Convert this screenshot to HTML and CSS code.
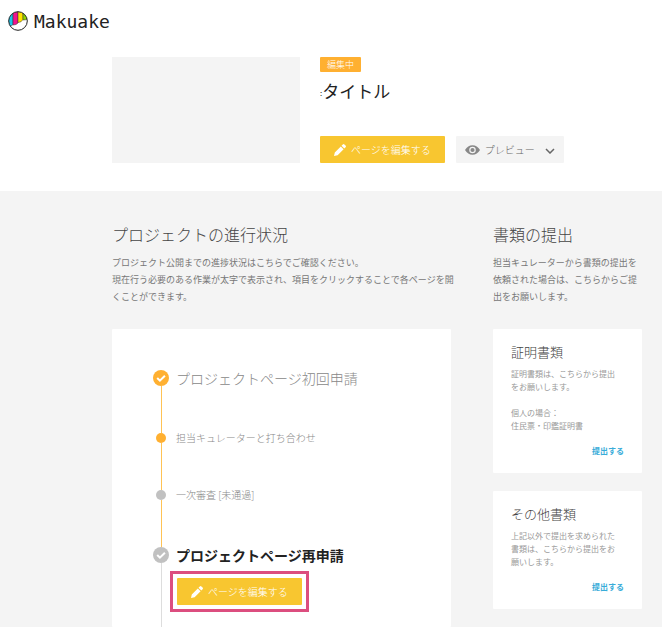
FILE: index.html
```html
<!DOCTYPE html>
<html lang="ja">
<head>
    <meta charset="utf-8">
    <title>Makuake</title>
    <link rel="stylesheet" href="styles.css">
</head>
<body>
    <header class="site-header">
        <a class="logo" href="#">
            <svg class="logo-mark" viewBox="0 0 20 20" aria-hidden="true">
                <defs>
                    <clipPath id="mark"><circle cx="10" cy="10" r="9.300"/></clipPath>
                </defs>
                <circle cx="10" cy="10" r="9.300" fill="#fff"/>
                <g clip-path="url(#mark)" stroke="#333" stroke-width="0.500">
                    <path d="M0 0h5v13.500q-1 1.300-2.500 1.300H0z" fill="#1cc3ea"/>
                    <path d="M5 0h5v12q-1.500 2-5 2z" fill="#f0148c"/>
                    <path d="M10 0h5v8.500q-1.500 3-5 3z" fill="#ffe100"/>
                    <path d="M15 0h5v7q-1.500 2.500-5 2z" fill="#8fd400"/>
                </g>
                <circle cx="10" cy="10" r="9.300" fill="none" stroke="#222"/>
            </svg>
            <span>Makuake</span>
        </a>
    </header>

    <section class="project">
        <div class="thumbnail"></div>
        <div class="project-info">
            <span class="status">編集中</span>
            <h1><span class="mark">:</span>タイトル</h1>
            <div class="actions">
                <button type="button" class="btn btn-edit">
                    <svg class="icon-pencil" viewBox="0 0 12 12" aria-hidden="true">
                        <path d="M0 12l.8-3.600 6-6 2.800 2.800-6 6zM7.500 1.700L8.800.4q.8-.7 1.600 0l1.200 1.200q.7.8 0 1.600l-1.300 1.300z" fill="#fff"/>
                    </svg>
                    ページを編集する
                </button>
                <button type="button" class="btn btn-preview">
                    <svg class="icon-eye" viewBox="0 0 16 10" aria-hidden="true">
                        <path d="M0 5Q3 0 8 0t8 5q-3 5-8 5T0 5z" fill="#888"/>
                        <circle cx="8" cy="5" r="3.500" fill="#f4f4f4"/>
                        <circle cx="8" cy="5" r="2.200" fill="#888"/>
                    </svg>
                    プレビュー
                    <svg class="icon-arrow" viewBox="0 0 10 6" aria-hidden="true">
                        <path d="M1 1l4 4 4-4" fill="none" stroke="#666" stroke-width="1.500"/>
                    </svg>
                </button>
            </div>
        </div>
    </section>

    <main class="content">
        <section class="progress">
            <h2>プロジェクトの進行状況</h2>
            <p class="lead">プロジェクト公開までの進捗状況はこちらでご確認ください。<br>現在行う必要のある作業が太字で表示され、項目をクリックすることで各ページを開<br>くことができます。</p>
            <ol class="steps">
                <li class="step">
                    <div class="rail">
                        <svg class="check" viewBox="0 0 16 16" aria-hidden="true">
                            <circle cx="8" cy="8" r="8" fill="#ffb031"/>
                            <path d="M4.200 8l2.700 2.700 5-5" fill="none" stroke="#fff" stroke-width="2"/>
                        </svg>
                    </div>
                    <h3>プロジェクトページ初回申請</h3>
                </li>
                <li class="step small">
                    <div class="rail"><span class="dot done"></span></div>
                    <p>担当キュレーターと打ち合わせ</p>
                </li>
                <li class="step small">
                    <div class="rail"><span class="dot"></span></div>
                    <p>一次審査 [未通過]</p>
                </li>
                <li class="step current">
                    <div class="rail">
                        <svg class="check" viewBox="0 0 16 16" aria-hidden="true">
                            <circle cx="8" cy="8" r="8" fill="#c1c1c1"/>
                            <path d="M4.200 8l2.700 2.700 5-5" fill="none" stroke="#fff" stroke-width="2"/>
                        </svg>
                    </div>
                    <div>
                        <h3>プロジェクトページ再申請</h3>
                        <div class="highlight">
                            <button type="button" class="btn btn-edit">
                                <svg class="icon-pencil" viewBox="0 0 12 12" aria-hidden="true">
                                    <path d="M0 12l.8-3.600 6-6 2.800 2.800-6 6zM7.500 1.700L8.800.4q.8-.7 1.600 0l1.200 1.200q.7.8 0 1.600l-1.300 1.300z" fill="#fff"/>
                                </svg>
                                ページを編集する
                            </button>
                        </div>
                    </div>
                </li>
            </ol>
        </section>

        <aside class="documents">
            <h2>書類の提出</h2>
            <p class="lead">担当キュレーターから書類の提出を<br>依頼された場合は、こちらからご提<br>出をお願いします。</p>
            <div class="card">
                <h3>証明書類</h3>
                <p>証明書類は、こちらから提出<br>をお願いします。</p>
                <p>個人の場合：<br>住民票・印鑑証明書</p>
                <a href="#">提出する</a>
            </div>
            <div class="card">
                <h3>その他書類</h3>
                <p>上記以外で提出を求められた<br>書類は、こちらから提出をお<br>願いします。</p>
                <a href="#">提出する</a>
            </div>
        </aside>
    </main>
</body>
</html>
```
FILE: styles.css
```css
* {
    box-sizing: border-box;
}

body {
    display: flex;
    flex-direction: column;
    min-height: 100vh;
    margin: 0;
    font-family: "Noto Sans CJK JP", sans-serif;
    color: #444;
    background-color: #fff;
}

h1, h2, h3, p {
    margin: 0;
    font-weight: 300;
}

.site-header {
    padding: 10px 8px;
}

.logo {
    display: flex;
    align-items: center;
    gap: 6px;
    height: 22px;
    font-family: "DejaVu Sans Mono", monospace;
    font-size: 18px;
    color: #222;
    text-decoration: none;
}

.logo-mark {
    width: 20px;
    height: 20px;
}

.project {
    display: flex;
    gap: 20px;
    padding: 15px 20px 28px 112px;
}

.thumbnail {
    width: 188px;
    height: 106px;
    background-color: #f4f4f4;
}

.project-info {
    display: flex;
    flex-direction: column;
    align-items: flex-start;
}

.status {
    padding: 0 7px;
    border-radius: 1px;
    background-color: #ffb031;
    color: #fff;
    font-size: 9px;
    font-weight: 300;
    line-height: 15px;
}

h1 {
    margin-top: 6px;
    font-size: 17px;
    font-weight: 400;
    line-height: 26px;
    color: #222;
}

.mark {
    font-size: 8px;
    line-height: 8px;
    vertical-align: middle;
}

.actions {
    display: flex;
    gap: 11px;
    margin-top: auto;
}

.btn {
    display: flex;
    align-items: center;
    gap: 5px;
    height: 27px;
    border: none;
    border-radius: 1px;
    font-family: inherit;
    font-size: 10px;
    font-weight: 300;
    line-height: 14px;
    white-space: nowrap;
    cursor: pointer;
}

.btn-edit {
    padding: 0 14px;
    background-color: #f8c630;
    color: #fff;
}

.btn-preview {
    padding: 0 9px;
    background-color: #f4f4f4;
    color: #666;
}

.icon-pencil {
    width: 12px;
    height: 12px;
}

.icon-eye {
    width: 15px;
    height: 10px;
}

.icon-arrow {
    width: 10px;
    height: 6px;
    margin: 2px 0 0 5px;
}

.content {
    display: grid;
    grid-template-columns: minmax(0, 1fr) 149px;
    gap: 42px;
    flex: 1;
    padding: 31px 20px 0 112px;
    background-color: #f4f4f4;
}

.progress {
    display: flex;
    flex-direction: column;
}

h2 {
    font-size: 16px;
    line-height: 24px;
}

.lead {
    margin: 8px 0 24px;
    font-size: 9px;
    font-weight: 400;
    line-height: 17px;
    white-space: nowrap;
    color: #777;
}

.steps {
    flex: 1;
    display: flex;
    flex-direction: column;
    margin: 0;
    padding: 41px 20px 0 41px;
    border-radius: 1px;
    background-color: #fff;
    list-style: none;
}

.step {
    display: flex;
    gap: 7px;
    min-height: 63px;
    color: #888;
}

.step.small {
    min-height: 57px;
    font-size: 10px;
    line-height: 10px;
}

.step h3 {
    font-size: 14px;
    line-height: 16px;
}

.step.current {
    flex: 1;
}

.step.current h3 {
    font-weight: 700;
    color: #222;
}

.rail {
    display: flex;
    flex-direction: column;
    align-items: center;
    width: 16px;
}

.rail::after {
    content: "";
    flex: 1;
    width: 1px;
    background-color: #ffc355;
}

.current .rail::after {
    background-color: #ddd;
}

.check {
    width: 16px;
    height: 16px;
}

.dot {
    width: 10px;
    height: 10px;
    border-radius: 50%;
    background-color: #c1c1c1;
}

.dot.done {
    background-color: #ffb031;
}

.highlight {
    width: fit-content;
    margin: 8px 0 0 -6px;
    padding: 4px;
    border: 3px solid #dc4e7f;
}

.card {
    display: flex;
    flex-direction: column;
    margin-bottom: 18px;
    padding: 14px 18px 16px;
    border-radius: 1px;
    background-color: #fff;
}

.card h3 {
    margin-bottom: 6px;
    font-size: 13px;
    line-height: 18px;
}

.card p {
    margin-bottom: 13px;
    font-size: 8px;
    font-weight: 400;
    line-height: 13px;
    white-space: nowrap;
    color: #999;
}

.card a {
    align-self: flex-end;
    font-size: 8px;
    font-weight: 700;
    line-height: 12px;
    color: #38acd9;
    text-decoration: none;
}
```
